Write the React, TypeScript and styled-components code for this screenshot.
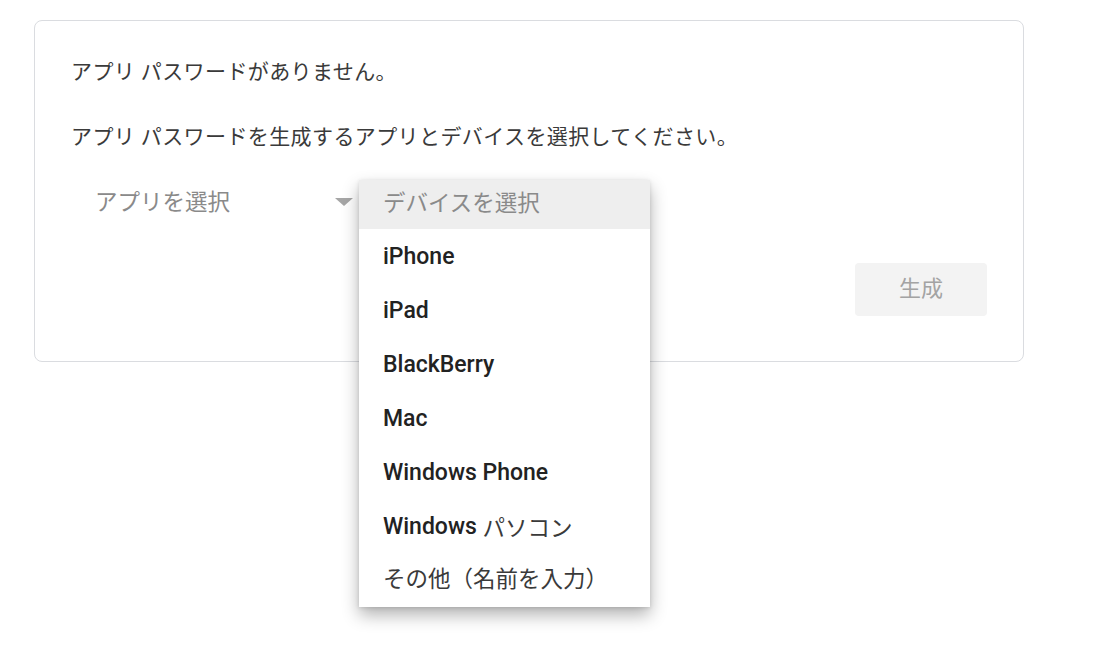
import React from 'react'
import styled, { createGlobalStyle } from 'styled-components';

// Global
const GlobalStyle = createGlobalStyle`
  html, body {
    margin: 0;
    padding: 0;
    background: #ffffff;
  }
  body {
    font-family: Roboto, "Noto Sans CJK JP", sans-serif;
    color: #3c3c3c;
  }
`;

// Styles
const Page = styled.div`
  box-sizing: border-box;
  min-height: 100vh;
  padding: 20px 0 0 34px;
`;

const Card = styled.section`
  box-sizing: border-box;
  width: 990px;
  height: 342px;
  border: 1px solid #dadce0;
  border-radius: 8px;
  padding: 37px 36px 0 36px;
  display: flex;
  flex-direction: column;
`;

const Message = styled.p<{ $gap?: number }>`
  margin: ${({ $gap }) => $gap ?? 0}px 0 0 0;
  font-size: 21px;
  line-height: 28px;
  letter-spacing: 0.4px;
  color: #3a3a3a;
  white-space: nowrap;
`;

const SelectRow = styled.div`
  display: flex;
  margin-top: 24px;
  height: 50px;
`;

const Select = styled.div`
  position: relative;
  box-sizing: border-box;
  width: 288px;
  display: flex;
  align-items: center;
  padding-left: 24px;
`;

const Placeholder = styled.span`
  flex: 1;
  font-size: 22.5px;
  color: #8a8a8a;
`;

const Caret = styled.span`
  width: 0;
  height: 0;
  margin-right: 6px;
  margin-top: 4px;
  border-left: 9px solid transparent;
  border-right: 9px solid transparent;
  border-top: 8px solid #a6a6a6;
`;

const Menu = styled.ul`
  position: absolute;
  top: 5px;
  left: 0;
  width: 291px;
  margin: 0;
  padding: 0;
  list-style: none;
  background: #ffffff;
  box-shadow: 0 8px 16px rgba(0, 0, 0, 0.3), 0 1px 4px rgba(0, 0, 0, 0.12);
  z-index: 10;
`;

const MenuItem = styled.li<{ $header?: boolean; $jp?: boolean }>`
  box-sizing: border-box;
  height: ${({ $header }) => ($header ? 49 : 54)}px;
  display: flex;
  align-items: center;
  padding: 0 0 ${({ $jp }) => ($jp ? 7 : 0)}px 24px;
  font-size: ${({ $header }) => ($header ? 22.5 : 23)}px;
  font-weight: ${({ $header }) => ($header ? 400 : 500)};
  color: ${({ $header }) => ($header ? '#8a8a8a' : '#222222')};
  background: ${({ $header }) => ($header ? '#eeeeee' : 'transparent')};
  white-space: nowrap;
`;

const Jp = styled.span`
  font-weight: 400;
  font-size: 22.5px;
  color: #3a3a3a;
`;

const Actions = styled.div`
  display: flex;
  justify-content: flex-end;
  margin-top: 38px;
`;

const GenerateButton = styled.button`
  width: 132px;
  height: 53px;
  border: none;
  border-radius: 4px;
  padding: 0 0 7px 0;
  background: #f3f3f3;
  color: #a3a3a3;
  font-family: Roboto, "Noto Sans CJK JP", sans-serif;
  font-size: 22px;
  cursor: default;
`;

const devices: { label: React.ReactNode; jp?: boolean }[] = [
  { label: 'iPhone' },
  { label: 'iPad' },
  { label: 'BlackBerry' },
  { label: 'Mac' },
  { label: 'Windows Phone' },
  { label: <>Windows&nbsp;<Jp>パソコン</Jp></> },
  { label: <Jp>その他（名前を入力）</Jp>, jp: true },
];

const App = () => {
  return (
    <>
      <GlobalStyle />
      <Page>
        <Card>
          <Message>アプリ パスワードがありません。</Message>
          <Message $gap={37}>アプリ パスワードを生成するアプリとデバイスを選択してください。</Message>
          <SelectRow>
            <Select>
              <Placeholder>アプリを選択</Placeholder>
              <Caret />
            </Select>
            <Select>
              <Menu>
                <MenuItem $header $jp>デバイスを選択</MenuItem>
                {devices.map((d, i) => (
                  <MenuItem key={i} $jp={d.jp}>{d.label}</MenuItem>
                ))}
              </Menu>
            </Select>
          </SelectRow>
          <Actions>
            <GenerateButton disabled>生成</GenerateButton>
          </Actions>
        </Card>
      </Page>
    </>
  )
}

export default App
